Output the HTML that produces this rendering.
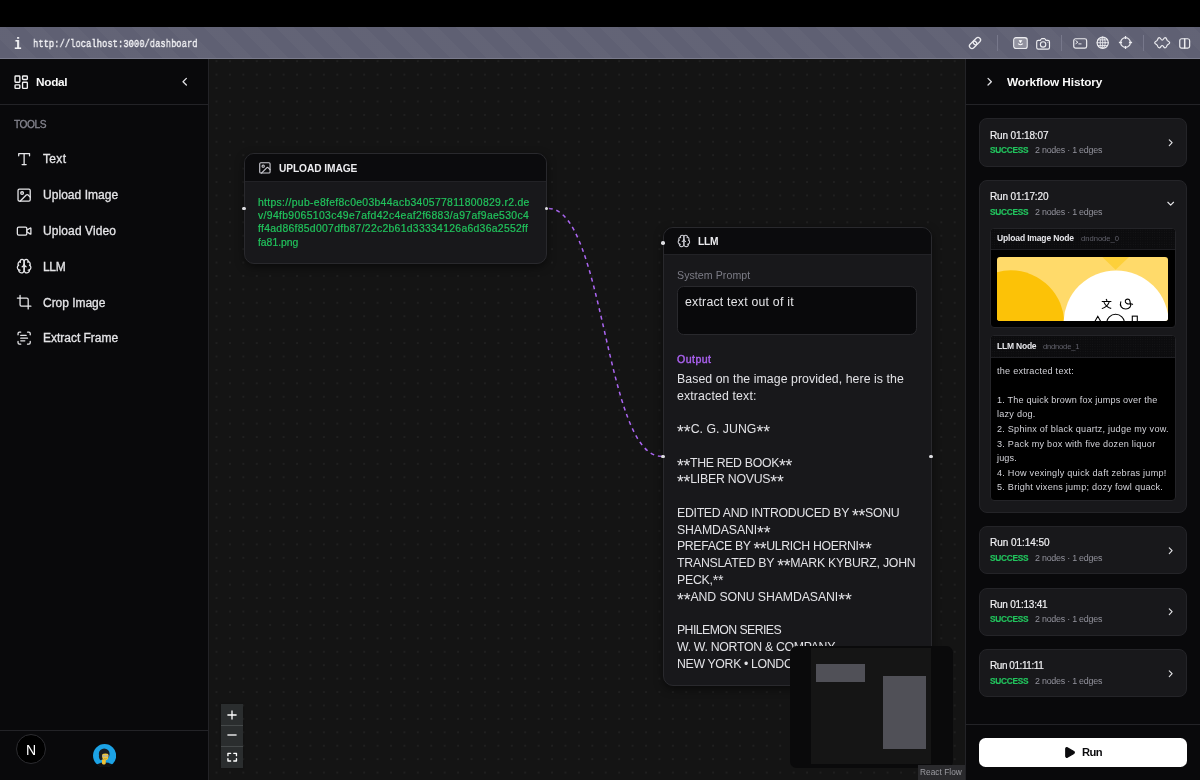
<!DOCTYPE html>
<html lang="en">
<head>
<meta charset="utf-8">
<title>Nodal</title>
<style>
*{box-sizing:border-box;margin:0;padding:0}
html,body{width:1200px;height:780px;overflow:hidden;background:#09090b}
body{font-family:"Liberation Sans",sans-serif;color:#e4e4e7;position:relative;-webkit-font-smoothing:antialiased}
.t{will-change:transform}
.abs{position:absolute}
svg.ic{fill:none;stroke:currentColor;stroke-width:2;stroke-linecap:round;stroke-linejoin:round;display:block;overflow:visible}
.t{position:absolute;white-space:pre;display:block}
#black{left:0;top:0;width:1200px;height:27px;background:#000}
#urlbar{left:0;top:27px;width:1200px;height:32px;background-color:#5f6073;
 background-image:repeating-linear-gradient(45deg,rgba(255,255,255,0) 0,rgba(255,255,255,0) 12.73px,rgba(255,255,255,.025) 12.73px,rgba(255,255,255,.025) 25.46px);
 border-bottom:1px solid #7a7b8c}
.sep{position:absolute;top:35px;width:1px;height:16px;background:#77788b}
#side{left:0;top:59px;width:209px;height:721px;background:#09090b;border-right:1px solid #232327}
.hline{position:absolute;height:1px;background:#232327}
#canvas{left:209px;top:59px;width:756px;height:721px;background:#141414;overflow:hidden}
.node{position:absolute;background:#18181b;border:1px solid #29292d;border-radius:10px;box-shadow:0 3px 8px rgba(0,0,0,.5)}
.nh{position:absolute;left:0;top:0;right:0;background:#0b0b0d;border-bottom:1px solid #222226;border-radius:9px 9px 0 0}
.handle{position:absolute;width:3.6px;height:3.6px;border-radius:50%;background:#dedee2;margin:-1.8px 0 0 -1.8px}
#right{left:965px;top:59px;width:235px;height:721px;background:#09090b;border-left:1px solid #232327}
.run{position:absolute;left:979px;width:208px;background:#18181b;border:1px solid #242428;border-radius:8px}
.sub{position:absolute;left:989.5px;width:186px;background:#000;border:1px solid #242428;border-radius:4px;overflow:hidden}
.subh{position:absolute;left:0;top:0;right:0;background-color:#0c0c0e;border-bottom:1px solid #1f1f23;
 background-image:radial-gradient(circle,rgba(255,255,255,.045) .5px,transparent .7px);background-size:2.4px 2.4px}
#canvas{background-image:radial-gradient(circle,#292929 .5px,transparent .9px);background-size:13.43px 13.43px;background-position:.785px -4.515px}
.as{font-size:1.42em;vertical-align:-.28em;line-height:0}.ar{font-size:1.15em;vertical-align:-.04em;line-height:0}
</style>
</head>
<body>
<header>
<div id="black" class="abs"></div><div id="urlbar" class="abs"></div>
<span class="t" style='left:14.20px;top:35.80px;font-size:16px;line-height:19px;color:#f4f4f6;font-weight:700;font-family:"Liberation Mono",monospace;transform:scaleX(.8);transform-origin:0 0;'>i</span>
<span class="t" style='left:33.00px;top:36.80px;font-size:11.6px;line-height:14px;color:#f4f4f7;font-family:"Liberation Mono",monospace;transform:scaleX(.763);transform-origin:0 0;-webkit-text-stroke:.35px currentColor;'>http://localhost:3000/dashboard</span>
<svg class="ic abs" viewBox="0 0 14 14" style="left:968px;top:36.2px;width:14px;height:14px;color:#ececf0;stroke-width:1.25"><g transform="rotate(-45 7 7)"><rect x="0.200" y="4.450" width="8.300" height="5.100" rx="2.550"/><rect x="5.500" y="4.450" width="8.300" height="5.100" rx="2.550"/></g></svg>
<div class="sep" style="left:997px"></div>
<svg class="ic abs" viewBox="0 0 15 12.2" style="left:1013px;top:37px;width:15px;height:12.2px;color:#ececf0;stroke-width:1.3"><rect x="0.750" y="0.750" width="13.400" height="10.700" rx="2.200"/><rect x="1.600" y="1.600" width="11.700" height="9" rx="1.400" fill="rgba(255,255,255,.3)" stroke="none"/><path d="M5.600 3.300h3.700l-1.850 2.900z" fill="#fff" stroke="none"/><path d="M4.700 6.600c.9 2.300 4.600 2.300 5.500 0l-1.300 0c-.6 1-2.300 1-2.900 0z" fill="#fff" stroke="none"/></svg>
<svg class="ic abs" viewBox="0 0 14.2 11.8" style="left:1036px;top:37.6px;width:14.2px;height:11.8px;color:#ececf0;stroke-width:1.15"><path d="M4.300 2.400l.9-1.400a.8.800 0 0 1 .7-.4h2.500a.8.800 0 0 1 .7.400l.9 1.400h1.900a1.600 1.600 0 0 1 1.600 1.600v5.500a1.600 1.600 0 0 1-1.600 1.600H2.300a1.600 1.600 0 0 1-1.600-1.600V4a1.600 1.600 0 0 1 1.600-1.600z"/><circle cx="7.100" cy="6.500" r="2.700"/><circle cx="11.900" cy="4.300" r=".5" fill="currentColor" stroke="none"/></svg>
<div class="sep" style="left:1061px"></div>
<svg class="ic abs" viewBox="0 0 14.4 11" style="left:1072.5px;top:37.6px;width:14.4px;height:11px;color:#ececf0;stroke-width:1.2"><rect x="0.750" y="0.750" width="12.900" height="9.400" rx="1.900"/><path d="M2.900 2.800l2 1.400-2 1.400M5.800 5.900h2.300" stroke-width="1"/></svg>
<svg class="ic abs" viewBox="0 0 13.4 13.4" style="left:1096px;top:36px;width:13.4px;height:13.4px;color:#ececf0;stroke-width:1.2"><circle cx="6.700" cy="6.750" r="5.600"/><ellipse cx="6.700" cy="6.750" rx="2.500" ry="5.600" stroke-width=".9"/><path d="M1.100 6.750h11.200M2 3.900h9.400M2 9.600h9.400M6.700 1.150v11.200" stroke-width=".9"/></svg>
<svg class="ic abs" viewBox="0 0 15 15" style="left:1117.6px;top:35.4px;width:15px;height:15px;color:#ececf0;stroke-width:1.2"><circle cx="7.500" cy="7.500" r="4.850"/><path d="M7.500 .9v3.200M7.500 10.900v3.200M.9 7.500h3.200M10.900 7.500h3.200" stroke-width="1.300" stroke-linecap="butt"/></svg>
<div class="sep" style="left:1143px"></div>
<svg class="ic abs" viewBox="0 0 16.4 11.6" style="left:1153.6px;top:37.4px;width:16.4px;height:11.6px;color:#ececf0;stroke-width:1.2"><path d="M.7 5.800C.7 4.500 2.800 4.300 3.300 3.300 3.700 2.300 4 .7 5.300 .7 6.800 .7 6.900 3.100 8.200 3.100 9.500 3.100 9.600 .7 11.100 .7 12.400 .7 12.700 2.300 13.100 3.300 13.600 4.300 15.700 4.500 15.700 5.800 15.700 7.100 13.600 7.300 13.100 8.300 12.700 9.300 12.400 10.900 11.100 10.900 9.600 10.900 9.500 8.500 8.200 8.500 6.900 8.500 6.800 10.900 5.300 10.900 4 10.900 3.700 9.300 3.300 8.300 2.800 7.300 .7 7.100 .7 5.800Z"/></svg>
<svg class="ic abs" viewBox="0 0 11.4 11" style="left:1178.7px;top:37.8px;width:11.4px;height:11px;color:#ececf0;stroke-width:1.2"><rect x="0.750" y="0.750" width="9.900" height="9.400" rx="1.900"/><path d="M5.700 .9v9.100" stroke-width="1.500"/></svg>
</header>
<aside>
<div id="side" class="abs"></div>
<div class="hline" style="left:0;top:104px;width:208px"></div>
<div class="hline" style="left:0;top:730px;width:208px"></div>
<svg class="ic abs" viewBox="0 0 24 24" style="left:12.90px;top:73.70px;width:16.4px;height:16.4px;color:#f4f4f5;stroke-width:2;"><rect width="7" height="9" x="3" y="3" rx="1"/><rect width="7" height="5" x="14" y="3" rx="1"/><rect width="7" height="9" x="14" y="12" rx="1"/><rect width="7" height="5" x="3" y="16" rx="1"/></svg>
<span class="t" style='left:36.40px;top:75.30px;font-size:11.8px;line-height:14px;color:#fafafa;font-weight:700;letter-spacing:-0.295px;'>Nodal</span>
<svg class="ic abs" viewBox="0 0 24 24" style="left:177.70px;top:75.20px;width:13.4px;height:13.4px;color:#e0e0e4;stroke-width:2.3;"><path d="m15 18-6-6 6-6"/></svg>
<span class="t" style='left:13.50px;top:118.80px;font-size:10.2px;line-height:12px;color:#85858f;letter-spacing:-0.440px;-webkit-text-stroke:.3px currentColor;'>TOOLS</span>
<svg class="ic abs" viewBox="0 0 24 24" style="left:16.38px;top:150.93px;width:16.25px;height:16.25px;color:#e7e7ea;stroke-width:1.9;"><polyline points="4 7 4 4 20 4 20 7"/><line x1="9" x2="15" y1="20" y2="20"/><line x1="12" x2="12" y1="4" y2="20"/></svg>
<span class="t" style='left:42.60px;top:152.30px;font-size:12px;line-height:14px;color:#e4e4e7;letter-spacing:0.328px;-webkit-text-stroke:.3px currentColor;'>Text</span>
<svg class="ic abs" viewBox="0 0 24 24" style="left:16.38px;top:186.78px;width:16.25px;height:16.25px;color:#e7e7ea;stroke-width:1.9;"><rect width="18" height="18" x="3" y="3" rx="2" ry="2"/><circle cx="9" cy="9" r="2"/><path d="m21 15-3.086-3.086a2 2 0 0 0-2.828 0L6 21"/></svg>
<span class="t" style='left:42.60px;top:188.30px;font-size:12px;line-height:14px;color:#e4e4e7;letter-spacing:0.044px;-webkit-text-stroke:.3px currentColor;'>Upload Image</span>
<svg class="ic abs" viewBox="0 0 24 24" style="left:16.38px;top:222.63px;width:16.25px;height:16.25px;color:#e7e7ea;stroke-width:1.9;"><path d="m16 13 5.223 3.482a.5.5 0 0 0 .777-.416V7.870a.5.5 0 0 0-.752-.432L16 10.500"/><rect x="2" y="6" width="14" height="12" rx="2"/></svg>
<span class="t" style='left:42.60px;top:224.30px;font-size:12px;line-height:14px;color:#e4e4e7;letter-spacing:0.105px;-webkit-text-stroke:.3px currentColor;'>Upload Video</span>
<svg class="ic abs" viewBox="0 0 24 24" style="left:16.38px;top:258.48px;width:16.25px;height:16.25px;color:#e7e7ea;stroke-width:1.9;"><path d="M12 5a3 3 0 1 0-5.997.125 4 4 0 0 0-2.526 5.770 4 4 0 0 0 .556 6.588A4 4 0 1 0 12 18Z"/><path d="M12 5a3 3 0 1 1 5.997.125 4 4 0 0 1 2.526 5.770 4 4 0 0 1-.556 6.588A4 4 0 1 1 12 18Z"/><path d="M15 13a4.500 4.500 0 0 1-3-4 4.500 4.500 0 0 1-3 4"/><path d="M17.599 6.500a3 3 0 0 0 .399-1.375"/><path d="M6.003 5.125A3 3 0 0 0 6.401 6.500"/><path d="M3.477 10.896a4 4 0 0 1 .585-.396"/><path d="M19.938 10.500a4 4 0 0 1 .585.396"/><path d="M6 18a4 4 0 0 1-1.967-.516"/><path d="M19.967 17.484A4 4 0 0 1 18 18"/></svg>
<span class="t" style='left:42.60px;top:260.30px;font-size:12px;line-height:14px;color:#e4e4e7;letter-spacing:-0.322px;-webkit-text-stroke:.3px currentColor;'>LLM</span>
<svg class="ic abs" viewBox="0 0 24 24" style="left:16.38px;top:294.32px;width:16.25px;height:16.25px;color:#e7e7ea;stroke-width:1.9;"><path d="M6 2v14a2 2 0 0 0 2 2h14"/><path d="M18 22V8a2 2 0 0 0-2-2H2"/></svg>
<span class="t" style='left:42.60px;top:296.30px;font-size:12px;line-height:14px;color:#e4e4e7;letter-spacing:-0.034px;-webkit-text-stroke:.3px currentColor;'>Crop Image</span>
<svg class="ic abs" viewBox="0 0 24 24" style="left:16.38px;top:330.17px;width:16.25px;height:16.25px;color:#e7e7ea;stroke-width:1.9;"><path d="M3 7V5a2 2 0 0 1 2-2h2"/><path d="M17 3h2a2 2 0 0 1 2 2v2"/><path d="M21 17v2a2 2 0 0 1-2 2h-2"/><path d="M7 21H5a2 2 0 0 1-2-2v-2"/><path d="M7 8h8"/><path d="M7 12h10"/><path d="M7 16h6"/></svg>
<span class="t" style='left:42.60px;top:331.30px;font-size:12px;line-height:14px;color:#e4e4e7;letter-spacing:-0.022px;-webkit-text-stroke:.3px currentColor;'>Extract Frame</span>
<div class="abs" style="left:16.200px;top:734.200px;width:30px;height:30px;border-radius:50%;background:#000;border:1px solid #2c2c30"></div>
<span class="t" style='left:26.00px;top:741.80px;font-size:14px;line-height:17px;color:#fff;'>N</span>
<svg class="abs" viewBox="0 0 24 24" style="left:92.600px;top:743.600px;width:23.200px;height:23.200px">
<defs><clipPath id="avc"><circle cx="12" cy="12" r="12.4"/></clipPath></defs>
<circle cx="12" cy="12" r="12" fill="#1ca3e6"/>
<g clip-path="url(#avc)">
<ellipse cx="12" cy="24.800" rx="10.800" ry="5.600" fill="#0f1115"/>
<rect x="9.300" y="15.500" width="3.900" height="5.600" rx="1.200" fill="#efc136"/>
<ellipse cx="11.600" cy="10.400" rx="5.600" ry="5.800" fill="#1b1d23"/>
<path d="M6.200 11c-.4 2.600.3 4.600 1.500 5.800l1.600-.4V11z" fill="#1b1d23"/>
<ellipse cx="12.700" cy="12.400" rx="3.300" ry="4.400" fill="#f2c73c"/>
<path d="M8.600 8.800c1.500-2.600 6-2.800 7.600-.2l.3 1.900c-2-.9-5.300-1.100-7.500.3z" fill="#1b1d23"/>
<rect x="9.600" y="11.300" width="6.600" height="2" rx=".8" fill="#a7adb6" opacity=".85"/>
<rect x="12.300" y="11.700" width="1" height="1.200" fill="#f2c73c"/>
<path d="M11.300 15c.9.600 2 .6 2.900 0" stroke="#8a6a1a" stroke-width=".5" fill="none"/>
</g></svg>
</aside>
<main>
<div id="canvas" class="abs"></div>
<svg class="abs" style="left:209px;top:59px;width:756px;height:721px;overflow:visible" viewBox="209 59 756 721"><path d="M548 208.400C604.700 208.400 604.700 456.300 661.400 456.300" fill="none" stroke="#ab66f2" stroke-width="1.500" stroke-dasharray="3.900 3.900" stroke-dashoffset="-0.800"/></svg>
<div class="node" style="left:243.600px;top:153px;width:303.300px;height:110.900px"><div class="nh" style="height:28px"></div></div>
<svg class="ic abs" viewBox="0 0 24 24" style="left:258.10px;top:160.80px;width:13.8px;height:13.8px;color:#cfcfd6;stroke-width:1.9;"><rect width="18" height="18" x="3" y="3" rx="2" ry="2"/><circle cx="9" cy="9" r="2"/><path d="m21 15-3.086-3.086a2 2 0 0 0-2.828 0L6 21"/></svg>
<span class="t" style='left:279.00px;top:162.80px;font-size:10.2px;line-height:12px;color:#ececef;font-weight:700;letter-spacing:-0.086px;'>UPLOAD IMAGE</span>
<span class="t" style='left:258.40px;top:196.80px;font-size:10.4px;line-height:12px;color:#21c45d;letter-spacing:0.319px;-webkit-text-stroke:.2px currentColor;'>https://pub-e8fef8c0e03b44acb340577811800829.r2.de</span>
<span class="t" style='left:258.40px;top:209.80px;font-size:10.4px;line-height:12px;color:#21c45d;letter-spacing:0.340px;-webkit-text-stroke:.2px currentColor;'>v/94fb9065103c49e7afd42c4eaf2f6883/a97af9ae530c4</span>
<span class="t" style='left:258.40px;top:222.80px;font-size:10.4px;line-height:12px;color:#21c45d;letter-spacing:0.294px;-webkit-text-stroke:.2px currentColor;'>ff4ad86f85d007dfb87/22c2b61d33334126a6d36a2552ff</span>
<span class="t" style='left:258.40px;top:236.80px;font-size:10.4px;line-height:12px;color:#21c45d;letter-spacing:-0.022px;-webkit-text-stroke:.2px currentColor;'>fa81.png</span>
<div class="handle" style="left:244px;top:208.400px"></div>
<div class="handle" style="left:546.300px;top:208.400px"></div>
<div class="node" style="left:662.600px;top:226.800px;width:269.200px;height:459.200px"><div class="nh" style="height:27.400px"></div></div>
<svg class="ic abs" viewBox="0 0 24 24" style="left:676.60px;top:234.10px;width:13.8px;height:13.8px;color:#cfcfd6;stroke-width:1.8;"><path d="M12 5a3 3 0 1 0-5.997.125 4 4 0 0 0-2.526 5.770 4 4 0 0 0 .556 6.588A4 4 0 1 0 12 18Z"/><path d="M12 5a3 3 0 1 1 5.997.125 4 4 0 0 1 2.526 5.770 4 4 0 0 1-.556 6.588A4 4 0 1 1 12 18Z"/><path d="M15 13a4.500 4.500 0 0 1-3-4 4.500 4.500 0 0 1-3 4"/><path d="M17.599 6.500a3 3 0 0 0 .399-1.375"/><path d="M6.003 5.125A3 3 0 0 0 6.401 6.500"/><path d="M3.477 10.896a4 4 0 0 1 .585-.396"/><path d="M19.938 10.500a4 4 0 0 1 .585.396"/><path d="M6 18a4 4 0 0 1-1.967-.516"/><path d="M19.967 17.484A4 4 0 0 1 18 18"/></svg>
<span class="t" style='left:697.50px;top:235.80px;font-size:10.2px;line-height:12px;color:#ececef;font-weight:700;letter-spacing:-0.219px;'>LLM</span>
<span class="t" style='left:677.00px;top:268.80px;font-size:10.6px;line-height:13px;color:#7c7c86;letter-spacing:0.065px;'>System Prompt</span>
<div class="abs" style="left:677px;top:285.800px;width:239.800px;height:49.600px;background:#09090b;border:1px solid #29292d;border-radius:6.500px"></div>
<span class="t" style='left:684.60px;top:294.80px;font-size:12.3px;line-height:15px;color:#e4e4e7;letter-spacing:0.224px;'>extract text out of it</span>
<span class="t" style='left:677.00px;top:352.80px;font-size:10.6px;line-height:13px;color:#ab62f0;letter-spacing:0.438px;-webkit-text-stroke:.4px currentColor;'>Output</span>
<span class="t" style='left:677.00px;top:371.80px;font-size:12.3px;line-height:15px;color:#e2e2e6;letter-spacing:0.066px;'>Based on the image provided, here is the</span>
<span class="t" style='left:677.00px;top:388.80px;font-size:12.3px;line-height:15px;color:#e2e2e6;letter-spacing:0.155px;'>extracted text:</span>
<span class="t" style='left:677.00px;top:421.80px;font-size:12.3px;line-height:15px;color:#e2e2e6;letter-spacing:0.017px;'><span class="as">**</span>C. G. JUNG<span class="as">**</span></span>
<span class="t" style='left:677.00px;top:455.80px;font-size:12.3px;line-height:15px;color:#e2e2e6;letter-spacing:-0.322px;'><span class="as">**</span>THE RED BOOK<span class="as">**</span></span>
<span class="t" style='left:677.00px;top:471.80px;font-size:12.3px;line-height:15px;color:#e2e2e6;letter-spacing:-0.227px;'><span class="as">**</span>LIBER NOVUS<span class="as">**</span></span>
<span class="t" style='left:677.00px;top:505.80px;font-size:12.3px;line-height:15px;color:#e2e2e6;letter-spacing:-0.288px;'>EDITED AND INTRODUCED BY <span class="as">**</span>SONU</span>
<span class="t" style='left:677.00px;top:522.80px;font-size:12.3px;line-height:15px;color:#e2e2e6;letter-spacing:-0.128px;'>SHAMDASANI<span class="as">**</span></span>
<span class="t" style='left:677.00px;top:538.80px;font-size:12.3px;line-height:15px;color:#e2e2e6;letter-spacing:-0.364px;'>PREFACE BY <span class="as">**</span>ULRICH HOERNI<span class="as">**</span></span>
<span class="t" style='left:677.00px;top:555.80px;font-size:12.3px;line-height:15px;color:#e2e2e6;letter-spacing:-0.233px;'>TRANSLATED BY <span class="as">**</span>MARK KYBURZ, JOHN</span>
<span class="t" style='left:677.00px;top:572.80px;font-size:12.3px;line-height:15px;color:#e2e2e6;letter-spacing:-0.251px;'>PECK,<span class="ar">**</span></span>
<span class="t" style='left:677.00px;top:589.80px;font-size:12.3px;line-height:15px;color:#e2e2e6;letter-spacing:-0.097px;'><span class="as">**</span>AND SONU SHAMDASANI<span class="as">**</span></span>
<span class="t" style='left:677.00px;top:622.80px;font-size:12.3px;line-height:15px;color:#e2e2e6;letter-spacing:-0.582px;'>PHILEMON SERIES</span>
<span class="t" style='left:677.00px;top:639.80px;font-size:12.3px;line-height:15px;color:#e2e2e6;letter-spacing:-0.299px;'>W. W. NORTON &amp; COMPANY</span>
<span class="t" style='left:677.00px;top:656.80px;font-size:12.3px;line-height:15px;color:#e2e2e6;letter-spacing:-0.343px;'>NEW YORK • LONDON</span>
<div class="handle" style="left:663px;top:243.200px"></div>
<div class="handle" style="left:663px;top:456.300px"></div>
<div class="handle" style="left:931.200px;top:456.300px"></div>
<div class="abs" style="left:221.100px;top:703.900px;width:21.600px;height:63.800px;background:#2a2d2e;box-shadow:0 0 2px rgba(0,0,0,.3)"><div class="abs" style="left:0;top:20.700px;width:100%;height:1px;background:#45494a"></div><div class="abs" style="left:0;top:42px;width:100%;height:1px;background:#45494a"></div></div>
<svg class="ic abs" viewBox="0 0 10 10" style="left:226.800px;top:709.700px;width:10px;height:10px;color:#fff;stroke-width:1.300;stroke-linecap:butt"><path d="M5 .4v9.200M.4 5h9.200"/></svg>
<svg class="ic abs" viewBox="0 0 10 10" style="left:226.800px;top:730.300px;width:10px;height:10px;color:#fff;stroke-width:1.300;stroke-linecap:butt"><path d="M.4 5h9.200"/></svg>
<svg class="ic abs" viewBox="0 0 10 10" style="left:226.600px;top:752px;width:10.400px;height:10.400px;color:#fff;stroke-width:1.300;stroke-linecap:round;stroke-linejoin:round"><path d="M.9 3.500V1.300h2.600M6.500 1.300h2.600v2.200M9.100 6.500v2.200H6.500M3.500 8.700H.9V6.500"/></svg>
<div class="abs" style="left:789.500px;top:645.800px;width:163px;height:121.800px;background:#0a0a0b;border-radius:6.500px;overflow:hidden"><div class="abs" style="left:21.300px;top:2.600px;width:120.700px;height:115.200px;background:#151515"></div><div class="abs" style="left:26.800px;top:18.400px;width:48.700px;height:17.600px;background:#505057"></div><div class="abs" style="left:93.700px;top:30.500px;width:42.800px;height:72.700px;background:#505057"></div></div>
<div class="abs" style="left:917.600px;top:765px;width:47.400px;height:15px;background:#2a2a2d"></div>
<span class="t" style='left:920.40px;top:767.30px;font-size:8.3px;line-height:10px;color:#9c9ca2;letter-spacing:0.033px;'>React Flow</span>
</main>
<aside>
<div id="right" class="abs"></div>
<div class="hline" style="left:966px;top:104px;width:234px"></div>
<div class="hline" style="left:966px;top:724px;width:234px"></div>
<svg class="ic abs" viewBox="0 0 24 24" style="left:982.60px;top:75.30px;width:13.4px;height:13.4px;color:#e0e0e4;stroke-width:2.3;"><path d="m9 18 6-6-6-6"/></svg>
<span class="t" style='left:1006.70px;top:75.30px;font-size:11.8px;line-height:14px;color:#fafafa;font-weight:700;letter-spacing:-0.093px;'>Workflow History</span>
<div class="run" style="top:118.4px;height:48.2px"></div><span class="t" style='left:989.60px;top:129.80px;font-size:10px;line-height:12px;color:#f0f0f3;letter-spacing:-0.142px;-webkit-text-stroke:.18px currentColor;'>Run 01:18:07</span><span class="t" style='left:989.60px;top:145.30px;font-size:8.3px;line-height:10px;color:#22c55e;font-weight:700;letter-spacing:-0.271px;-webkit-text-stroke:.15px currentColor;'>SUCCESS</span><span class="t" style='left:1035.00px;top:144.80px;font-size:8.9px;line-height:11px;color:#92929c;letter-spacing:-0.229px;'>2 nodes · 1 edges</span><svg class="ic abs" viewBox="0 0 24 24" style="left:1164.90px;top:136.70px;width:11.4px;height:11.4px;color:#e4e4e7;stroke-width:2.4;"><path d="m9 18 6-6-6-6"/></svg>
<div class="run" style="top:180.3px;height:332.4px"></div><span class="t" style='left:989.60px;top:190.80px;font-size:10px;line-height:12px;color:#f0f0f3;letter-spacing:-0.142px;-webkit-text-stroke:.18px currentColor;'>Run 01:17:20</span><span class="t" style='left:989.60px;top:207.30px;font-size:8.3px;line-height:10px;color:#22c55e;font-weight:700;letter-spacing:-0.271px;-webkit-text-stroke:.15px currentColor;'>SUCCESS</span><span class="t" style='left:1035.00px;top:206.80px;font-size:8.9px;line-height:11px;color:#92929c;letter-spacing:-0.229px;'>2 nodes · 1 edges</span><svg class="ic abs" viewBox="0 0 24 24" style="left:1164.90px;top:198.20px;width:11.4px;height:11.4px;color:#e4e4e7;stroke-width:2.4;"><path d="m6 9 6 6 6-6"/></svg>
<div class="run" style="top:526.2px;height:47.8px"></div><span class="t" style='left:989.60px;top:536.80px;font-size:10px;line-height:12px;color:#f0f0f3;letter-spacing:-0.051px;-webkit-text-stroke:.18px currentColor;'>Run 01:14:50</span><span class="t" style='left:989.60px;top:553.30px;font-size:8.3px;line-height:10px;color:#22c55e;font-weight:700;letter-spacing:-0.271px;-webkit-text-stroke:.15px currentColor;'>SUCCESS</span><span class="t" style='left:1035.00px;top:552.80px;font-size:8.9px;line-height:11px;color:#92929c;letter-spacing:-0.229px;'>2 nodes · 1 edges</span><svg class="ic abs" viewBox="0 0 24 24" style="left:1164.90px;top:544.50px;width:11.4px;height:11.4px;color:#e4e4e7;stroke-width:2.4;"><path d="m9 18 6-6-6-6"/></svg>
<div class="run" style="top:587.5px;height:48.0px"></div><span class="t" style='left:989.60px;top:598.80px;font-size:10px;line-height:12px;color:#f0f0f3;letter-spacing:-0.224px;-webkit-text-stroke:.18px currentColor;'>Run 01:13:41</span><span class="t" style='left:989.60px;top:614.30px;font-size:8.3px;line-height:10px;color:#22c55e;font-weight:700;letter-spacing:-0.271px;-webkit-text-stroke:.15px currentColor;'>SUCCESS</span><span class="t" style='left:1035.00px;top:613.80px;font-size:8.9px;line-height:11px;color:#92929c;letter-spacing:-0.229px;'>2 nodes · 1 edges</span><svg class="ic abs" viewBox="0 0 24 24" style="left:1164.90px;top:605.80px;width:11.4px;height:11.4px;color:#e4e4e7;stroke-width:2.4;"><path d="m9 18 6-6-6-6"/></svg>
<div class="run" style="top:649.2px;height:48.1px"></div><span class="t" style='left:989.60px;top:659.80px;font-size:10px;line-height:12px;color:#f0f0f3;letter-spacing:-0.443px;-webkit-text-stroke:.18px currentColor;'>Run 01:11:11</span><span class="t" style='left:989.60px;top:676.30px;font-size:8.3px;line-height:10px;color:#22c55e;font-weight:700;letter-spacing:-0.271px;-webkit-text-stroke:.15px currentColor;'>SUCCESS</span><span class="t" style='left:1035.00px;top:675.80px;font-size:8.9px;line-height:11px;color:#92929c;letter-spacing:-0.229px;'>2 nodes · 1 edges</span><svg class="ic abs" viewBox="0 0 24 24" style="left:1164.90px;top:667.50px;width:11.4px;height:11.4px;color:#e4e4e7;stroke-width:2.4;"><path d="m9 18 6-6-6-6"/></svg>
<div class="sub" style="top:227.500px;height:100.300px"><div class="subh" style="height:21.500px"></div></div>
<span class="t" style='left:997.00px;top:233.30px;font-size:8.5px;line-height:10px;color:#e6e6ea;font-weight:700;letter-spacing:-0.146px;'>Upload Image Node</span>
<span class="t" style='left:1081.00px;top:234.30px;font-size:7.6px;line-height:9px;color:#62626c;'>dndnode_0</span>
<svg class="abs" viewBox="997.200 256.650 171.100 64.150" style="left:997.200px;top:256.650px;width:171.100px;height:64.150px;border-radius:3px;overflow:hidden;will-change:transform">
<rect x="990" y="250" width="190" height="80" fill="#ffda6a"/>
<circle cx="1011" cy="323.500" r="53.500" fill="#fcc207"/>
<path d="M1102.400 256.600h26.900l-13.500 12.800z" fill="#fdd03a"/>
<circle cx="1116.400" cy="322.700" r="52.600" fill="#fff"/>
<text x="1101.500" y="308" font-family="'Liberation Sans','Noto Sans CJK SC',sans-serif" font-size="10.600" font-weight="500" fill="#000">文</text>
<g fill="none" stroke="#000" stroke-width="1.100" stroke-linecap="round">
<path d="M1121 301.500C1119.500 305.500 1122 308.700 1126 308.700C1130 308.700 1131.700 305.300 1130.600 303.400L1132.800 304M1130.600 303.400C1128 304 1125 303 1125.500 300.600C1126 298.200 1129.600 298.100 1130.100 300.600C1130.400 302 1130.600 303 1130.600 303.400"/>
<path d="M1094.600 322l3.400-6 3.400 6"/><circle cx="1115.800" cy="322.700" r="8.800"/><rect x="1132.500" y="315.800" width="5" height="8"/>
</g></svg>
<div class="sub" style="top:335.200px;height:166.200px"><div class="subh" style="height:21.700px"></div></div>
<span class="t" style='left:996.80px;top:341.30px;font-size:8.5px;line-height:10px;color:#e6e6ea;font-weight:700;letter-spacing:-0.211px;'>LLM Node</span>
<span class="t" style='left:1043.30px;top:342.30px;font-size:7.6px;line-height:9px;color:#62626c;letter-spacing:-0.202px;'>dndnode_1</span>
<span class="t" style='left:996.80px;top:365.80px;font-size:9.1px;line-height:11px;color:#d2d2d8;letter-spacing:0.250px;'>the extracted text:</span>
<span class="t" style='left:996.80px;top:394.80px;font-size:9.1px;line-height:11px;color:#d2d2d8;letter-spacing:0.189px;'>1. The quick brown fox jumps over the</span>
<span class="t" style='left:996.80px;top:408.80px;font-size:9.1px;line-height:11px;color:#d2d2d8;letter-spacing:0.237px;'>lazy dog.</span>
<span class="t" style='left:996.80px;top:423.80px;font-size:9.1px;line-height:11px;color:#d2d2d8;letter-spacing:0.237px;'>2. Sphinx of black quartz, judge my vow.</span>
<span class="t" style='left:996.80px;top:438.80px;font-size:9.1px;line-height:11px;color:#d2d2d8;letter-spacing:0.238px;'>3. Pack my box with five dozen liquor</span>
<span class="t" style='left:996.80px;top:452.80px;font-size:9.1px;line-height:11px;color:#d2d2d8;letter-spacing:0.120px;'>jugs.</span>
<span class="t" style='left:996.80px;top:467.80px;font-size:9.1px;line-height:11px;color:#d2d2d8;letter-spacing:0.252px;'>4. How vexingly quick daft zebras jump!</span>
<span class="t" style='left:996.80px;top:481.80px;font-size:9.1px;line-height:11px;color:#d2d2d8;letter-spacing:0.242px;'>5. Bright vixens jump; dozy fowl quack.</span>
<div class="abs" style="left:979px;top:737.500px;width:208px;height:29.800px;background:#fff;border-radius:6.500px"></div>
<svg class="ic abs" viewBox="0 0 24 24" style="left:1062.50px;top:746.00px;width:13px;height:13px;color:#0b0b0d;stroke-width:2;"><path d="M5 5a2 2 0 0 1 3.008-1.728l11.997 6.998a2 2 0 0 1 .003 3.458l-12 7A2 2 0 0 1 5 19z" fill="currentColor"/></svg>
<span class="t" style='left:1082.30px;top:745.80px;font-size:11.2px;line-height:13px;color:#0b0b0d;font-weight:700;letter-spacing:-0.525px;'>Run</span>
</aside>
</body>
</html>
